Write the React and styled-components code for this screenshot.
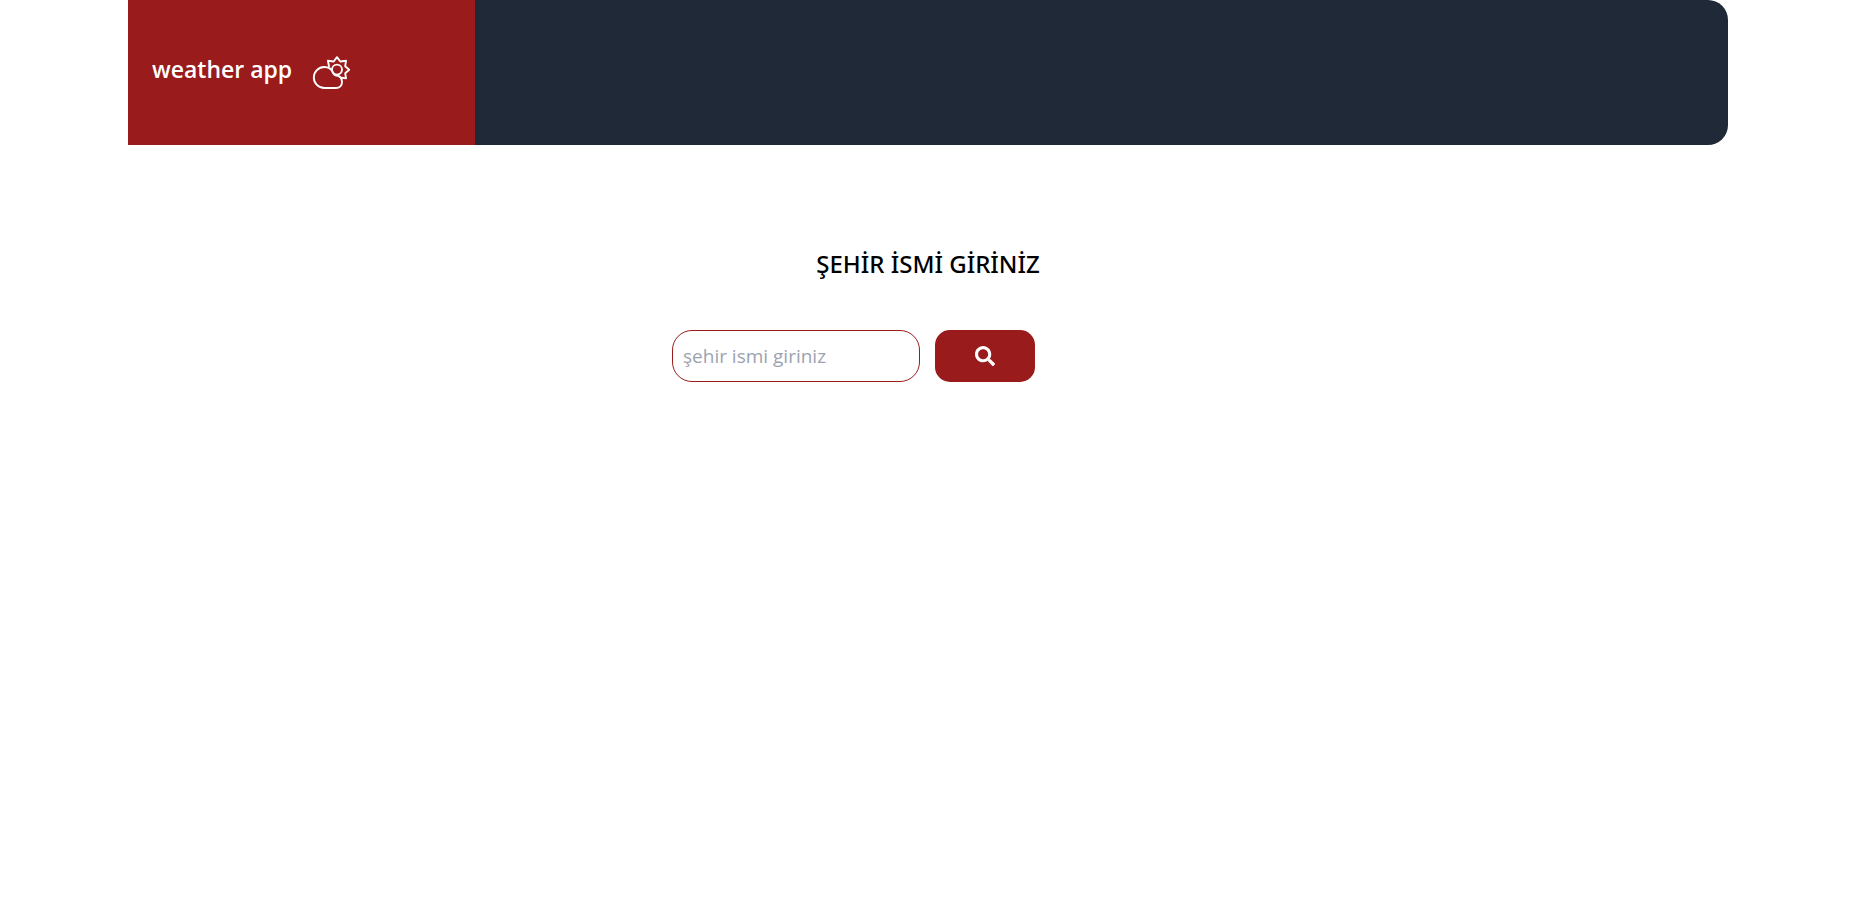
import React from "react";
import styled, { createGlobalStyle } from "styled-components";
import { FaSearch } from "react-icons/fa";

const GlobalStyle = createGlobalStyle`
  *, *::before, *::after { box-sizing: border-box; }
  body {
    margin: 0;
    background: #fff;
    color: #000;
    font-family: "Segoe UI", "Open Sans", "Noto Sans", sans-serif;
  }
`;

const Page = styled.div`
  padding: 0 134px 0 128px;
`;

const Header = styled.header`
  display: flex;
  height: 145px;
  overflow: hidden;
  background: #1f2937;
  border-radius: 0 20px 20px 0;
`;

const Brand = styled.div`
  display: flex;
  align-items: center;
  gap: 20px;
  width: 347px;
  padding: 0 24px;
  background: #991b1b;
  color: #fff;
`;

const BrandName = styled.span`
  padding-bottom: 8px;
  font-size: 23px;
  line-height: 36px;
  font-weight: 600;
`;

const Main = styled.main`
  display: flex;
  flex-direction: column;
  align-items: center;
  gap: 48px;
  padding-top: 101px;
`;

const Title = styled.h1`
  margin: 0;
  font-family: "Segoe UI", "Noto Sans", sans-serif;
  font-size: 24px;
  line-height: 36px;
  font-weight: 500;
`;

const SearchForm = styled.form`
  display: flex;
  gap: 15px;
  width: 100%;
  max-width: 512px;
`;

const CityInput = styled.input`
  width: 248px;
  height: 52px;
  padding: 0 10px;
  border: 1px solid #991b1b;
  border-radius: 20px;
  background: #fff;
  color: #000;
  font-family: inherit;
  font-size: 19px;

  &::placeholder {
    color: #9ca3af;
    opacity: 1;
  }
`;

const SearchButton = styled.button`
  display: flex;
  align-items: center;
  justify-content: center;
  width: 100px;
  height: 52px;
  padding: 0;
  border: 0;
  border-radius: 15px;
  background: #991b1b;
  color: #fff;
  font-size: 20px;
  cursor: pointer;
`;

function CloudSunIcon() {
  return (
    <svg
      width="40"
      height="35"
      viewBox="0 0 40 35"
      fill="none"
      stroke="currentColor"
      strokeWidth="1.9"
      strokeLinecap="round"
      strokeLinejoin="round"
      aria-hidden="true"
    >
      <path d="M12.3 33A10.5 10.5 0 0 1 12.3 12C16.4 12 19.6 14.2 21 17.6C22 20 23 20.4 24.5 20.5C28 21 30 23.5 30 27C30 30.5 27.5 33 24 33Z" />
      <circle cx="25" cy="14.6" r="5" />
      <path d="M17 11.3L15.9 5.8L21.7 6.5L25 2.2L28.3 6.5L34 5.8L33.2 11.2L37.2 14.7L33.2 18.2L34 23.4L30 22.8" />
    </svg>
  );
}

export default function App() {
  return (
    <>
      <GlobalStyle />
      <Page>
        <Header>
          <Brand>
            <BrandName>weather app</BrandName>
            <CloudSunIcon />
          </Brand>
        </Header>
        <Main>
          <Title>ŞEHİR İSMİ GİRİNİZ</Title>
          <SearchForm onSubmit={(event) => event.preventDefault()}>
            <CityInput type="text" placeholder="şehir ismi giriniz" aria-label="şehir ismi giriniz" />
            <SearchButton type="submit" aria-label="Ara">
              <FaSearch aria-hidden="true" />
            </SearchButton>
          </SearchForm>
        </Main>
      </Page>
    </>
  );
}
